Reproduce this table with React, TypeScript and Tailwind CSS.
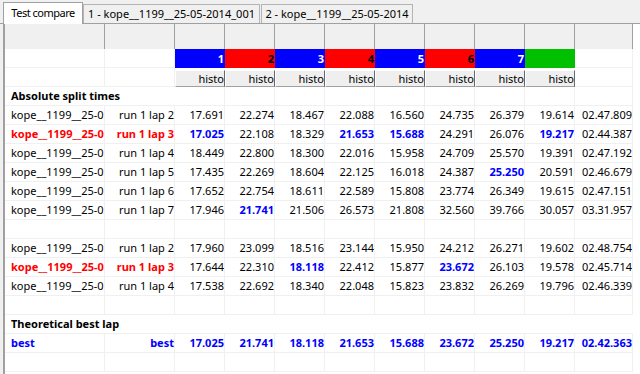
const COLS = "grid grid-cols-[100px_70px_repeat(8,50px)_58px]";

type LapRow = {
  name: string;
  lap: string;
  vals: string[];
  best: number[];
  red?: boolean;
};

const splitColors = [
  { bg: "bg-[#0000ff]", text: "text-white", label: "1" },
  { bg: "bg-[#ff0000]", text: "text-black", label: "2" },
  { bg: "bg-[#0000ff]", text: "text-white", label: "3" },
  { bg: "bg-[#ff0000]", text: "text-black", label: "4" },
  { bg: "bg-[#0000ff]", text: "text-white", label: "5" },
  { bg: "bg-[#ff0000]", text: "text-black", label: "6" },
  { bg: "bg-[#0000ff]", text: "text-white", label: "7" },
  { bg: "bg-[#00c000]", text: "text-black", label: "" },
];

const groupA: LapRow[] = [
  { name: "kope__1199__25-05-2014_001", lap: "run 1 lap 2", vals: ["17.691", "22.274", "18.467", "22.088", "16.560", "24.735", "26.379", "19.614", "02.47.809"], best: [] },
  { name: "kope__1199__25-05-2014_001", lap: "run 1 lap 3", vals: ["17.025", "22.108", "18.329", "21.653", "15.688", "24.291", "26.076", "19.217", "02.44.387"], best: [0, 3, 4, 7], red: true },
  { name: "kope__1199__25-05-2014_001", lap: "run 1 lap 4", vals: ["18.449", "22.800", "18.300", "22.016", "15.958", "24.709", "25.570", "19.391", "02.47.192"], best: [] },
  { name: "kope__1199__25-05-2014_001", lap: "run 1 lap 5", vals: ["17.435", "22.269", "18.604", "22.125", "16.018", "24.387", "25.250", "20.591", "02.46.679"], best: [6] },
  { name: "kope__1199__25-05-2014_001", lap: "run 1 lap 6", vals: ["17.652", "22.754", "18.611", "22.589", "15.808", "23.774", "26.349", "19.615", "02.47.151"], best: [] },
  { name: "kope__1199__25-05-2014_001", lap: "run 1 lap 7", vals: ["17.946", "21.741", "21.506", "26.573", "21.808", "32.560", "39.766", "30.057", "03.31.957"], best: [1] },
];

const groupB: LapRow[] = [
  { name: "kope__1199__25-05-2014", lap: "run 1 lap 2", vals: ["17.960", "23.099", "18.516", "23.144", "15.950", "24.212", "26.271", "19.602", "02.48.754"], best: [] },
  { name: "kope__1199__25-05-2014", lap: "run 1 lap 3", vals: ["17.644", "22.310", "18.118", "22.412", "15.877", "23.672", "26.103", "19.578", "02.45.714"], best: [2, 5], red: true },
  { name: "kope__1199__25-05-2014", lap: "run 1 lap 4", vals: ["17.538", "22.692", "18.340", "22.048", "15.823", "23.832", "26.269", "19.796", "02.46.339"], best: [] },
];

const bestLap = ["17.025", "21.741", "18.118", "21.653", "15.688", "23.672", "25.250", "19.217", "02.42.363"];

const cell = "h-[19px] border-r border-b border-[#f0f0f0] leading-[18px] overflow-hidden whitespace-nowrap";

function DataRow({ row }: { row: LapRow }) {
  const label = row.red ? "font-bold text-[#ff0000]" : "text-black";
  return (
    <div className={COLS}>
      <div className={`${cell} pl-[6px] ${label}`}>{row.name}</div>
      <div className={`${cell} text-right ${label}`}>{row.lap}</div>
      {row.vals.map((v, i) => (
        <div
          key={i}
          className={`${cell} text-right ${row.best.includes(i) ? "font-bold text-[#0000ff]" : "text-black"}`}
        >
          {v}
        </div>
      ))}
    </div>
  );
}

function BlankRow() {
  return (
    <div className={COLS}>
      {Array.from({ length: 11 }).map((_, i) => (
        <div key={i} className={cell} />
      ))}
    </div>
  );
}

function TitleRow({ title, lines = true }: { title: string; lines?: boolean }) {
  return (
    <div className={COLS}>
      <div className="col-span-2 h-[19px] border-b border-[#f0f0f0] pl-[6px] font-bold leading-[18px] text-black whitespace-nowrap">
        {title}
      </div>
      {Array.from({ length: 9 }).map((_, i) => (
        <div key={i} className={`h-[19px] border-b border-[#f0f0f0] ${lines ? "border-r" : ""}`} />
      ))}
    </div>
  );
}

export default function App() {
  return (
    <div className="h-[374px] w-[640px] overflow-hidden bg-[#f0f0f0] text-[11px] text-black [font-family:'Noto_Sans',sans-serif]">
      <div className="flex h-[24px] items-end border-b border-[#a0a0a0] pl-[3px]">
        <div className="relative -mb-px flex h-[22px] w-[80px] items-center justify-center border border-b-0 border-[#a0a0a0] bg-white tracking-[-0.5px]">
          Test compare
        </div>
        <div className="flex h-[19px] w-[177px] items-center justify-center border border-b-0 border-[#b4b4b4] bg-[#f0f0f0]">
          1 - kope__1199__25-05-2014_001
        </div>
        <div className="ml-[1px] flex h-[19px] w-[152px] items-center justify-center border border-b-0 border-[#b4b4b4] bg-[#f0f0f0]">
          2 - kope__1199__25-05-2014
        </div>
      </div>

      <div className="ml-[3px] h-[350px] border-l-2 border-[#a0a0a0] bg-white">
        <div className={COLS}>
          {Array.from({ length: 11 }).map((_, i) => (
            <div key={i} className="h-[25px] border-r border-[#a0a0a0] bg-[#f0f0f0]" />
          ))}
        </div>

        <div className={COLS}>
          <div className={cell} />
          <div className={cell} />
          {splitColors.map((c, i) => (
            <div key={i} className={`h-[19px] ${c.bg} ${c.text} pr-[1px] text-right font-bold leading-[19px]`}>
              {c.label}
            </div>
          ))}
          <div className={cell} />
        </div>

        <div className={COLS}>
          <div className={cell} />
          <div className={cell} />
          {splitColors.map((_, i) => (
            <div key={i} className="h-[19px] border-b border-[#f0f0f0] pt-[2px]">
              <div className="h-[17px] overflow-hidden border-t border-l border-r border-b border-t-white border-l-white border-r-[#696969] border-b-[#a0a0a0] bg-[#efefef] text-right leading-[15px] text-black">
                histo
              </div>
            </div>
          ))}
          <div className={cell} />
        </div>

        <TitleRow title="Absolute split times" />
        {groupA.map((r, i) => (
          <DataRow key={i} row={r} />
        ))}
        <BlankRow />
        {groupB.map((r, i) => (
          <DataRow key={i} row={r} />
        ))}
        <BlankRow />
        <TitleRow title="Theoretical best lap" lines={false} />
        <div className={COLS}>
          <div className={`${cell} pl-[6px] font-bold text-[#0000ff]`}>best</div>
          <div className={`${cell} text-right font-bold text-[#0000ff]`}>best</div>
          {bestLap.map((v, i) => (
            <div key={i} className={`${cell} text-right font-bold text-[#0000ff]`}>
              {v}
            </div>
          ))}
        </div>
        <BlankRow />
      </div>
    </div>
  );
}
